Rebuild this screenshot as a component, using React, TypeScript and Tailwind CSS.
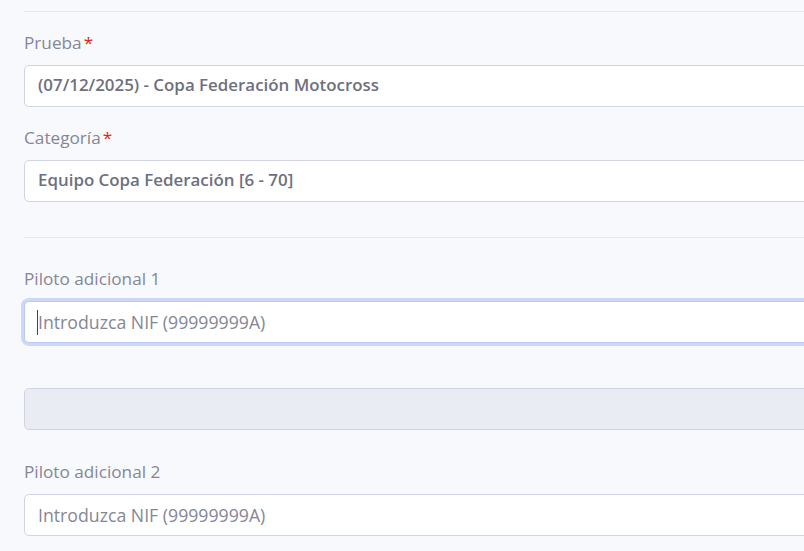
const font = { fontFamily: '"Open Sans", "Noto Sans", sans-serif' };

function Label({ text, required }: { text: string; required?: boolean }) {
  return (
    <label className="block h-6 text-[17.2px] leading-6 text-[#858796]">
      {text}
      {required && <span className="ml-[2px] text-[#e02020]">*</span>}
    </label>
  );
}

const fieldBase =
  "block h-[42px] w-full rounded-[5px] border pl-[13px] pr-3 leading-6 outline-none";

export default function App() {
  return (
    <div className="min-h-[551px] w-full overflow-hidden bg-[#f8f9fc]" style={font}>
      <div className="w-[1100px] pl-6 pt-[11px]">
        <hr className="border-t border-[#e3e6f0]" />

        {/* Prueba */}
        <div className="mt-[19px]">
          <Label text="Prueba" required />
          <input
            readOnly
            value="(07/12/2025) - Copa Federación Motocross"
            className={`${fieldBase} mt-[10px] border-[#d1d3e2] bg-white pb-[3px] text-[16.9px] font-semibold text-[#6e707e]`}
          />
        </div>

        {/* Categoría */}
        <div className="mt-[19px]">
          <Label text="Categoría" required />
          <input
            readOnly
            value="Equipo Copa Federación [6 - 70]"
            className={`${fieldBase} mt-[10px] border-[#d1d3e2] bg-white pb-[3px] text-[16.9px] font-semibold text-[#6e707e]`}
          />
        </div>

        <hr className="mt-[35px] border-t border-[#e3e6f0]" />

        {/* Piloto adicional 1 (focused) */}
        <div className="mt-[29px]">
          <Label text="Piloto adicional 1" />
          <div className="relative mt-[10px]">
            <input
              readOnly
              placeholder="Introduzca NIF (99999999A)"
              className={`${fieldBase} border-[#bac8f3] bg-white text-[17.7px] text-[#6e707e] shadow-[0_0_0_3px_rgba(78,115,223,0.25)] placeholder:text-[#858796]`}
            />
            <span className="absolute left-[13px] top-[9px] h-[25px] w-px bg-[#444]" />
          </div>
        </div>

        {/* disabled */}
        <div className="mt-[45px] h-[42px] rounded-[5px] border border-[#d1d3e2] bg-[#eaecf4]" />

        {/* Piloto adicional 2 */}
        <div className="mt-[30px]">
          <Label text="Piloto adicional 2" />
          <input
            readOnly
            placeholder="Introduzca NIF (99999999A)"
            className={`${fieldBase} mt-[10px] border-[#d1d3e2] bg-white text-[17.7px] text-[#6e707e] placeholder:text-[#858796]`}
          />
        </div>
      </div>
    </div>
  );
}
